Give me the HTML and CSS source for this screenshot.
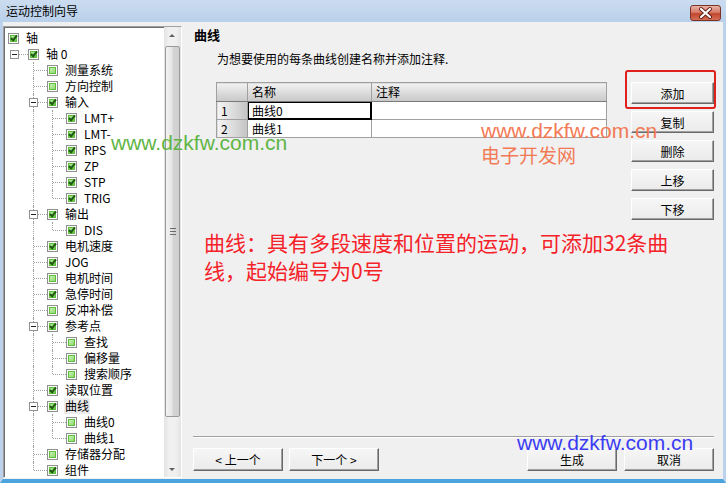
FILE: index.html
```html
<!DOCTYPE html>
<html lang="zh-CN">
<head>
    <meta charset="UTF-8">
    <title>运动控制向导</title>
    <link rel="stylesheet" href="styles.css">
</head>
<body>
<div class="window">
    <div class="titlebar">
        <span>运动控制向导</span>
        <div class="close">
            <svg width="31" height="16" viewBox="0 0 31 16">
                <path d="M11 4 L20 12 M20 4 L11 12" stroke="#5a1c12" stroke-width="4" stroke-linecap="round"/>
                <path d="M11 4 L20 12 M20 4 L11 12" stroke="#fff" stroke-width="2.2" stroke-linecap="round"/>
            </svg>
        </div>
    </div>

    <div class="main">
        <div class="tree-panel">
            <div class="tree">
                <div class="node root"><i class="cb on"></i><span>轴</span></div>
                <div class="node"><i class="ln hz"><b class="exp"></b></i><i class="cb on"></i><span>轴 0</span></div>
                <div class="node"><i class="ln"></i><i class="ln tee"></i><i class="cb"></i><span>测量系统</span></div>
                <div class="node"><i class="ln"></i><i class="ln tee"></i><i class="cb"></i><span>方向控制</span></div>
                <div class="node"><i class="ln"></i><i class="ln tee"><b class="exp"></b></i><i class="cb on"></i><span>输入</span></div>
                <div class="node"><i class="ln"></i><i class="ln v"></i><i class="ln tee"></i><i class="cb on"></i><span>LMT+</span></div>
                <div class="node"><i class="ln"></i><i class="ln v"></i><i class="ln tee"></i><i class="cb on"></i><span>LMT-</span></div>
                <div class="node"><i class="ln"></i><i class="ln v"></i><i class="ln tee"></i><i class="cb on"></i><span>RPS</span></div>
                <div class="node"><i class="ln"></i><i class="ln v"></i><i class="ln tee"></i><i class="cb on"></i><span>ZP</span></div>
                <div class="node"><i class="ln"></i><i class="ln v"></i><i class="ln tee"></i><i class="cb on"></i><span>STP</span></div>
                <div class="node"><i class="ln"></i><i class="ln v"></i><i class="ln end"></i><i class="cb on"></i><span>TRIG</span></div>
                <div class="node"><i class="ln"></i><i class="ln tee"><b class="exp"></b></i><i class="cb on"></i><span>输出</span></div>
                <div class="node"><i class="ln"></i><i class="ln v"></i><i class="ln end"></i><i class="cb on"></i><span>DIS</span></div>
                <div class="node"><i class="ln"></i><i class="ln tee"></i><i class="cb on"></i><span>电机速度</span></div>
                <div class="node"><i class="ln"></i><i class="ln tee"></i><i class="cb on"></i><span>JOG</span></div>
                <div class="node"><i class="ln"></i><i class="ln tee"></i><i class="cb"></i><span>电机时间</span></div>
                <div class="node"><i class="ln"></i><i class="ln tee"></i><i class="cb on"></i><span>急停时间</span></div>
                <div class="node"><i class="ln"></i><i class="ln tee"></i><i class="cb"></i><span>反冲补偿</span></div>
                <div class="node"><i class="ln"></i><i class="ln tee"><b class="exp"></b></i><i class="cb on"></i><span>参考点</span></div>
                <div class="node"><i class="ln"></i><i class="ln v"></i><i class="ln tee"></i><i class="cb"></i><span>查找</span></div>
                <div class="node"><i class="ln"></i><i class="ln v"></i><i class="ln tee"></i><i class="cb"></i><span>偏移量</span></div>
                <div class="node"><i class="ln"></i><i class="ln v"></i><i class="ln end"></i><i class="cb"></i><span>搜索顺序</span></div>
                <div class="node"><i class="ln"></i><i class="ln tee"></i><i class="cb on"></i><span>读取位置</span></div>
                <div class="node"><i class="ln"></i><i class="ln tee"><b class="exp"></b></i><i class="cb on"></i><span class="sel">曲线</span></div>
                <div class="node"><i class="ln"></i><i class="ln v"></i><i class="ln tee"></i><i class="cb"></i><span>曲线0</span></div>
                <div class="node"><i class="ln"></i><i class="ln v"></i><i class="ln end"></i><i class="cb"></i><span>曲线1</span></div>
                <div class="node"><i class="ln"></i><i class="ln tee"></i><i class="cb"></i><span>存储器分配</span></div>
                <div class="node"><i class="ln"></i><i class="ln end"></i><i class="cb on"></i><span>组件</span></div>
            </div>
            <div class="scrollbar">
                <div class="arrow up"></div>
                <div class="thumb"><span class="grip"></span></div>
                <div class="track"></div>
                <div class="arrow down"></div>
            </div>
        </div>

        <div class="content">
            <h2>曲线</h2>
            <p class="desc">为想要使用的每条曲线创建名称并添加注释.</p>

            <div class="grid-row">
                <table class="grid">
                    <tr><th class="corner"></th><th class="col-name">名称</th><th class="col-note">注释</th></tr>
                    <tr><th class="rh">1</th><td class="cur">曲线0</td><td></td></tr>
                    <tr><th class="rh">2</th><td>曲线1</td><td></td></tr>
                </table>
                <div class="side">
                    <button class="btn">添加</button>
                    <button class="btn">复制</button>
                    <button class="btn">删除</button>
                    <button class="btn">上移</button>
                    <button class="btn">下移</button>
                </div>
            </div>

            <div class="spacer"></div>

            <div class="footer">
                <button class="btn wide">&lt; 上一个</button>
                <button class="btn wide">下一个 &gt;</button>
                <button class="btn wide push">生成</button>
                <button class="btn wide">取消</button>
            </div>
        </div>
    </div>

    <!-- annotations pasted over the screenshot -->
    <div class="mark-box"></div>
    <div class="wm green">www.dzkfw.com.cn</div>
    <div class="wm orange">www.dzkfw.com.cn</div>
    <div class="wm orange cn">电子开发网</div>
    <div class="wm blue">www.dzkfw.com.cn</div>
    <p class="note">曲线：具有多段速度和位置的运动，可添加32条曲线，起始编号为0号</p>
</div>
</body>
</html>
```

FILE: styles.css
```css
body {
    margin: 0;
    font-family: "Noto Sans CJK SC", "Liberation Sans", sans-serif;
    font-size: 12px;
    color: #000;
}
.window {
    position: relative;
    width: 726px;
    height: 483px;
    display: flex;
    flex-direction: column;
    background-color: #f0f0f0;
    overflow: hidden;
}
.titlebar {
    position: relative;
    height: 22px;
    flex: none;
    display: flex;
    align-items: center;
    padding-left: 6px;
    background: linear-gradient(#cbdcf0, #b9d0ea);
    line-height: 16px;
}
.close {
    position: absolute;
    right: 5px;
    top: 5px;
    width: 31px;
    height: 16px;
    box-sizing: border-box;
    border: 1px solid #7b3226;
    border-radius: 3px;
    background: linear-gradient(#eab2a4, #d77c68 45%, #c2472f 55%, #d46e55);
}
.close svg {
    display: block;
    margin: -1px 0 0 -1px;
}
.main {
    flex: 1;
    display: flex;
    min-height: 0;
    border: 3px solid #bcd2ec;
    border-top: none;
    border-bottom: 4px solid #4ba4de;
}

/* tree */
.tree-panel {
    width: 179px;
    box-sizing: border-box;
    margin: 4px 0 1px 0;
    display: flex;
    border: 1px solid;
    border-color: #a0a0a0 #ffffff #ffffff #a0a0a0;
    box-shadow: inset 1px 1px #6d6d6d;
    background-color: #fff;
}
.tree {
    flex: 1;
    padding: 3px 0 0 1px;
    overflow: hidden;
}
.node {
    display: flex;
    align-items: center;
    height: 16px;
    line-height: 16px;
    white-space: nowrap;
}
.node span {
    margin-left: 6px;
    padding: 0 1px;
}
.node span.sel {
    background-color: #ececec;
}
.ln {
    position: relative;
    flex: none;
    width: 19px;
    height: 16px;
}
.ln.v::before,
.ln.tee::before,
.ln.end::before {
    content: "";
    position: absolute;
    left: 9px;
    top: 0;
    bottom: 0;
    border-left: 1px dotted #a0a0a0;
}
.ln.end::before {
    bottom: 8px;
}
.ln.hz::after,
.ln.tee::after,
.ln.end::after {
    content: "";
    position: absolute;
    left: 10px;
    top: 8px;
    width: 13px;
    border-top: 1px dotted #a0a0a0;
}
.exp {
    position: absolute;
    left: 5px;
    top: 4px;
    width: 7px;
    height: 7px;
    border: 1px solid #919191;
    background-color: #fff;
    z-index: 1;
}
.exp::after {
    content: "";
    position: absolute;
    left: 1px;
    top: 3px;
    width: 5px;
    height: 1px;
    background-color: #222;
}
.cb {
    position: relative;
    flex: none;
    width: 11px;
    height: 11px;
    box-sizing: border-box;
    margin-left: 4px;
    border: 1px solid #8e8f8f;
    background-color: #fff;
    z-index: 1;
}
.root .cb {
    margin-left: 3px;
}
.cb::before {
    content: "";
    position: absolute;
    left: 1px;
    top: 1px;
    right: 1px;
    bottom: 1px;
    background: linear-gradient(135deg, #d6f5c6, #7fd45b);
    box-shadow: inset 0 0 0 1px #5fbf3c;
}
.cb.on::before {
    background: linear-gradient(135deg, #c9f1b4, #55bd34);
}
.cb.on::after {
    content: "";
    position: absolute;
    left: 3px;
    top: 0px;
    width: 2px;
    height: 5px;
    border: solid #1f5c12;
    border-width: 0 2px 2px 0;
    transform: rotate(40deg);
}

/* scrollbar */
.scrollbar {
    width: 17px;
    flex: none;
    display: flex;
    flex-direction: column;
    background: linear-gradient(90deg, #e3e3e3, #f0f0f0 30%, #f0f0f0 70%, #e3e3e3);
}
.arrow {
    height: 17px;
    flex: none;
    position: relative;
}
.arrow::after {
    content: "";
    position: absolute;
    left: 5px;
    border-left: 3px solid transparent;
    border-right: 3px solid transparent;
}
.arrow.up::after {
    top: 7px;
    border-bottom: 3px solid #606060;
}
.arrow.down::after {
    top: 8px;
    border-top: 3px solid #606060;
}
.thumb {
    height: 371px;
    margin: 2px 1px 0 1px;
    box-sizing: border-box;
    border: 1px solid #9a9a9a;
    border-radius: 2px;
    background: linear-gradient(90deg, #f3f3f3, #e6e6e6 45%, #d4d4d4 55%, #cfcfcf);
    display: flex;
    align-items: center;
    justify-content: center;
}
.grip {
    width: 6px;
    height: 5px;
    border-top: 1px solid #6b6b6b;
    border-bottom: 1px solid #6b6b6b;
    position: relative;
}
.grip::after {
    content: "";
    position: absolute;
    left: 0;
    right: 0;
    top: 2px;
    border-top: 1px solid #6b6b6b;
}
.track {
    flex: 1;
}

/* right side */
.content {
    flex: 1;
    display: flex;
    flex-direction: column;
    padding: 5px 9px 0 12px;
}
.content h2 {
    margin: 0;
    font-size: 13px;
    font-weight: bold;
    line-height: 16px;
}
.desc {
    margin: 8px 0 0 23px;
    line-height: 16px;
}
.grid-row {
    display: flex;
    margin-top: 15px;
}
.grid {
    margin-left: 22px;
    border-collapse: collapse;
    background-color: #fff;
    align-self: flex-start;
}
.grid th,
.grid td {
    border: 1px solid #a0a0a0;
    padding: 0 0 0 4px;
    font-weight: normal;
    text-align: left;
    line-height: 16px;
    height: 17px;
}
.grid tr:first-child th {
    height: 18px;
    background: linear-gradient(#f2f2f2, #dcdcdc 50%, #c8c8c8);
    border-bottom-color: #7a7a7a;
}
.grid .corner {
    width: 26px;
}
.grid .col-name {
    width: 119px;
}
.grid .col-note {
    width: 230px;
}
.grid .rh {
    background: linear-gradient(90deg, #f4f4f4, #d8d8d8 60%, #c4c4c4);
}
.grid td.cur {
    box-shadow: inset 0 0 0 1px #000;
    border-color: #000;
}
.side {
    margin-left: auto;
    display: flex;
    flex-direction: column;
    gap: 7px;
}
.btn {
    width: 83px;
    height: 22px;
    padding: 0;
    box-sizing: border-box;
    font-family: "Noto Sans CJK SC", "Liberation Sans", sans-serif;
    font-size: 12px;
    color: #000;
    border: 1px solid;
    border-color: #ffffff #696969 #696969 #ffffff;
    box-shadow: inset -1px -1px #a0a0a0;
    background: linear-gradient(#f6f6f6, #ebebeb);
}
.spacer {
    flex: 1;
}
.footer {
    display: flex;
    gap: 6px;
    margin-left: -1px;
    padding: 11px 0 8px 0;
    border-top: 1px solid #a0a0a0;
    box-shadow: inset 0 1px #fff;
}
.btn.wide {
    width: 90px;
    height: 23px;
}
.btn.push {
    margin-left: auto;
    margin-right: 1px;
}

/* annotations */
.mark-box {
    position: absolute;
    left: 625px;
    top: 70px;
    width: 91px;
    height: 39px;
    box-sizing: border-box;
    border: 2px solid #e0201c;
    border-radius: 3px;
}
.wm {
    position: absolute;
    font-family: "Liberation Sans", sans-serif;
    font-size: 21px;
    line-height: 24px;
    white-space: nowrap;
}
.wm.green {
    left: 111px;
    top: 131px;
    color: #5fb545;
}
.wm.orange {
    left: 481px;
    top: 119px;
    color: #f27a55;
}
.wm.orange.cn {
    top: 143px;
    font-family: "Noto Sans CJK SC", sans-serif;
    font-size: 19px;
}
.wm.blue {
    left: 517px;
    top: 431px;
    color: #3b3bf2;
}
.note {
    position: absolute;
    left: 204px;
    top: 228px;
    width: 480px;
    margin: 0;
    font-size: 21px;
    line-height: 28px;
    color: #f5222a;
}
```
